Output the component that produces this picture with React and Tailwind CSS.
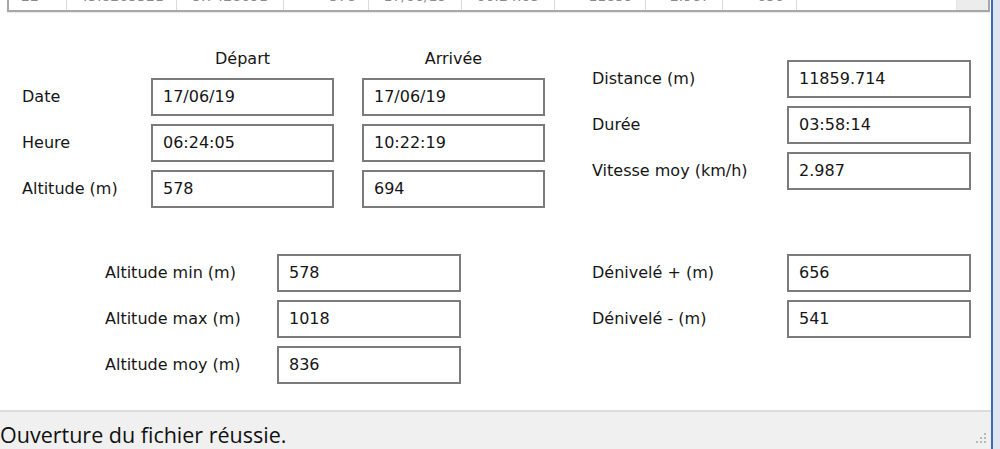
import React from 'react';

const font = { fontFamily: '"DejaVu Sans", Verdana, sans-serif' };

const topCells = [
  { w: 58, text: '22', align: 'left' },
  { w: 110, text: '45.8265321', align: 'center' },
  { w: 107, text: '5.7428091', align: 'center' },
  { w: 85, text: '578', align: 'right' },
  { w: 93, text: '17/06/19', align: 'center' },
  { w: 93, text: '06:24:05', align: 'center' },
  { w: 91, text: '11859', align: 'right' },
  { w: 77, text: '2.987', align: 'right' },
  { w: 74, text: '656', align: 'right' },
];

function Field({ value, width = 'w-[184px]' }) {
  return (
    <div className={`${width} h-[38px] border-2 border-[#7b7b7b] bg-white flex items-center pl-[10px] text-[16px] text-[#161616]`}>
      {value}
    </div>
  );
}

function Row({ label, labelWidth, children }) {
  return (
    <div className="flex items-center">
      <div className={`${labelWidth} text-[16px] text-[#161616]`}>{label}</div>
      {children}
    </div>
  );
}

export default function App() {
  return (
    <div className="w-[1000px] h-[449px] flex overflow-hidden bg-white" style={font}>
      {/* main window */}
      <div className="w-[991px] flex flex-col">
        {/* list view cut at the top */}
        <div className="h-[12px] ml-[7px] mr-[1px] border-l-2 border-r-2 border-b-2 border-[#a7a7a7] flex overflow-hidden shadow-[0_1px_1px_rgba(0,0,0,0.08)]">
          {topCells.map((c, i) => (
            <div
              key={i}
              style={{ width: c.w, textAlign: c.align }}
              className="border-r border-[#dadada] px-[12px] text-[14px] text-[#8a8a8a] leading-none -mt-[11px] shrink-0"
            >
              {c.text}
            </div>
          ))}
          <div className="flex-1" />
          <div className="w-[32px] bg-[#ececec] border-l border-[#e2e2e2]" />
        </div>

        {/* form */}
        <div className="flex-1 flex flex-col pl-[22px]">
          <div className="flex">
            {/* départ / arrivée */}
            <div className="flex flex-col w-[523px] pt-[36px]">
              <div className="flex h-[22px] items-center text-[16px] text-[#161616]">
                <div className="w-[129px]" />
                <div className="w-[183px] text-center">Départ</div>
                <div className="w-[28px]" />
                <div className="w-[183px] text-center">Arrivée</div>
              </div>
              <div className="flex flex-col gap-[8px] mt-[8px]">
                <Row label="Date" labelWidth="w-[129px]">
                  <Field value="17/06/19" width="w-[183px]" />
                  <div className="w-[28px]" />
                  <Field value="17/06/19" width="w-[183px]" />
                </Row>
                <Row label="Heure" labelWidth="w-[129px]">
                  <Field value="06:24:05" width="w-[183px]" />
                  <div className="w-[28px]" />
                  <Field value="10:22:19" width="w-[183px]" />
                </Row>
                <Row label="Altitude (m)" labelWidth="w-[129px]">
                  <Field value="578" width="w-[183px]" />
                  <div className="w-[28px]" />
                  <Field value="694" width="w-[183px]" />
                </Row>
              </div>
            </div>

            {/* totals */}
            <div className="flex flex-col gap-[8px] ml-[47px] pt-[48px]">
              <Row label="Distance (m)" labelWidth="w-[195px]">
                <Field value="11859.714" />
              </Row>
              <Row label="Durée" labelWidth="w-[195px]">
                <Field value="03:58:14" />
              </Row>
              <Row label="Vitesse moy (km/h)" labelWidth="w-[195px]">
                <Field value="2.987" />
              </Row>
            </div>
          </div>

          <div className="flex mt-[46px]">
            <div className="flex flex-col gap-[8px] pl-[83px]">
              <Row label="Altitude min (m)" labelWidth="w-[172px]">
                <Field value="578" />
              </Row>
              <Row label="Altitude max (m)" labelWidth="w-[172px]">
                <Field value="1018" />
              </Row>
              <Row label="Altitude moy (m)" labelWidth="w-[172px]">
                <Field value="836" />
              </Row>
            </div>
            <div className="flex flex-col gap-[8px] ml-[131px]">
              <Row label="Dénivelé + (m)" labelWidth="w-[195px]">
                <Field value="656" />
              </Row>
              <Row label="Dénivelé - (m)" labelWidth="w-[195px]">
                <Field value="541" />
              </Row>
            </div>
          </div>
        </div>

        {/* status bar */}
        <div className="h-[39px] border-t-2 border-[#dcdcdc] bg-[#f0f0f0] flex items-center justify-between">
          <span className="text-[21.5px] leading-none text-[#111] pt-[8px]" style={{ fontFamily: '"Open Sans", "Noto Sans", sans-serif' }}>
            Ouverture du fichier réussie.
          </span>
          <svg width="14" height="14" viewBox="0 0 14 14" className="mr-[4px] mt-[14px]">
            {[[11, 2], [11, 6], [7, 6], [11, 10], [7, 10], [3, 10]].map(([x, y], i) => (
              <rect key={i} x={x} y={y} width="2" height="2" fill="#b8b8b8" />
            ))}
          </svg>
        </div>
      </div>

      {/* window border / desktop edge */}
      <div className="w-[2px] bg-[#3a6bb8]" />
      <div className="flex-1 bg-[#dfe6f2]" />
    </div>
  );
}
